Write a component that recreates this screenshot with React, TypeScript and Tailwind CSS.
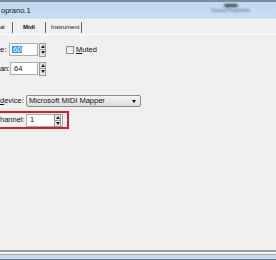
import React from 'react';

function Spinner({ className = '' }: { className?: string }) {
  return (
    <div className={`flex flex-col w-[7px] h-[13px] border border-[#9a9a9a] bg-[#e6e6e6] ${className}`}>
      <div className="flex-1 flex items-center justify-center border-b border-[#9a9a9a]">
        <div className="w-0 h-0 border-x-[2px] border-x-transparent border-b-[3px] border-b-[#222]" />
      </div>
      <div className="flex-1 flex items-center justify-center">
        <div className="w-0 h-0 border-x-[2px] border-x-transparent border-t-[3px] border-t-[#222]" />
      </div>
    </div>
  );
}

export default function App() {
  return (
    <div
      className="w-[276px] h-[260px] bg-[#f0f0f0] flex flex-col overflow-hidden text-[#111]"
      style={{ fontFamily: '"Liberation Sans", Arial, sans-serif' }}
    >
      {/* title bar */}
      <div className="h-[19px] border-t-2 border-[#7d8c99] bg-gradient-to-b from-[#c0d9f0] to-[#c8e0f6] flex items-center justify-between pr-[26px]">
        <span className="text-[7.5px] leading-none pl-px">oprano.1</span>
        <div className="flex flex-col items-center gap-[1px] mb-[4px] blur-[0.8px]">
          <span className="w-[14px] h-[3px] bg-[#3c4a58] rounded-full" />
          <span className="text-[5px] leading-none text-[#50606e]">Sound Properties</span>
        </div>
      </div>

      {/* tabs */}
      <div className="h-[16px] border-t border-[#fafafa] border-b border-b-[#fcfcfc] flex items-center text-[6px] leading-none">
        <span className="w-[12px]">al</span>
        <div className="w-px h-[11px] bg-[#666]" />
        <span className="w-[32px] pl-[10px] font-bold">Midi</span>
        <div className="w-px h-[11px] bg-[#666]" />
        <span className="w-[35px] pl-[5px]">Instrument</span>
        <div className="w-px h-[11px] bg-[#666]" />
      </div>

      {/* content */}
      <div className="flex flex-col pt-[8px] text-[7.5px] leading-none">
        <div className="flex items-center h-[13px]">
          <span className="w-[9px]">e:</span>
          <div className="w-[29px] h-[13px] bg-white border border-[#abadb3] flex items-center pl-[2px]">
            <span className="bg-[#3399ff] text-white px-px">60</span>
          </div>
          <Spinner className="ml-[1px] h-[14px]" />
          <div className="ml-[20px] w-[8px] h-[8px] border border-[#8e8f8f] bg-gradient-to-b from-[#e6e6e6] to-[#fafafa]" />
          <span className="ml-[2px]"><u>M</u>uted</span>
        </div>

        <div className="flex items-center h-[13px] mt-[6px]">
          <span className="w-[10px] whitespace-nowrap tracking-[-0.4px]">an:</span>
          <div className="w-[28px] h-[13px] bg-white border border-[#abadb3] flex items-center pl-[3px]">
            64
          </div>
          <Spinner className="ml-[1px] h-[14px]" />
        </div>

        <div className="flex items-center h-[12px] mt-[20px]">
          <span className="w-[26px]"><u>d</u>evice:</span>
          <div className="w-[115px] h-[12px] border border-[#8b8b8b] rounded-[2px] bg-gradient-to-b from-[#f4f4f4] to-[#dedede] flex items-center justify-between pl-[2px] pr-[4px]">
            <span>Microsoft MIDI Mapper</span>
            <div className="w-0 h-0 border-x-[2.5px] border-x-transparent border-t-[3px] border-t-[#111]" />
          </div>
        </div>

        <div className="mt-[4px] w-[69px] h-[18px] border-2 border-l-0 border-[#d4202c] flex items-center">
          <span className="w-[26px]">hannel:</span>
          <div className="w-[37px] h-[13px] bg-white border border-[#abadb3] flex items-center justify-between pl-[3px] pr-[1px]">
            <span>1</span>
            <Spinner className="h-[11px] w-[6px]" />
          </div>
        </div>
      </div>

      <div className="flex-1" />

      {/* bottom edge */}
      <div className="flex flex-col">
        <div className="h-[2px] bg-[#9d9d9d]" />
        <div className="h-[2px] bg-[#f4f4f4]" />
        <div className="h-px bg-[#a0a8b0]" />
        <div className="h-[4px] bg-[#c5dcf0]" />
        <div className="h-px bg-[#6c7b88]" />
      </div>
    </div>
  );
}
